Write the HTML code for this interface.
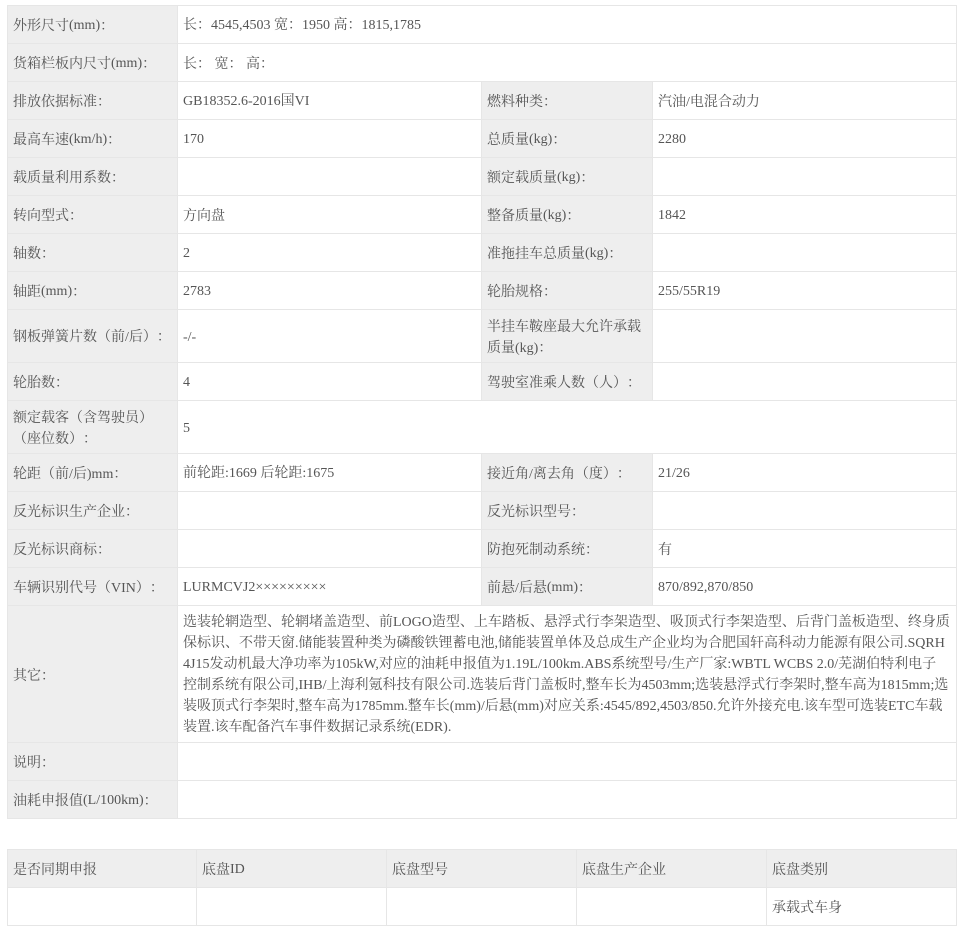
<!DOCTYPE html>
<html lang="zh"><head><meta charset="utf-8">
<style>
html,body{margin:0;padding:0;background:#fff;width:963px;height:931px;overflow:hidden}
body{font-family:"Liberation Serif","Noto Serif CJK SC",serif;font-size:14px;color:#555;line-height:21px;text-spacing-trim:space-all;font-feature-settings:"palt" 0}
table{position:absolute;left:7px;border-collapse:collapse;table-layout:fixed;width:949px}
td{border:1px solid #e6e6e6;padding:3px 5px 0;vertical-align:middle;word-break:break-all;box-sizing:border-box}
td.l{background:#eee}
td.v{padding-top:1px}
td.o{padding-top:5px}
span{position:relative;top:-1px}
</style></head><body>
<table style="top:5px">
<colgroup><col style="width:170px"><col style="width:304px"><col style="width:171px"><col style="width:304px"></colgroup>
<tr style="height:38px"><td class="l">外形尺寸<span>(mm)</span>：</td><td colspan="3" class="v">长：4545,4503 宽：1950 高：1815,1785</td></tr>
<tr style="height:38px"><td class="l">货箱栏板内尺寸<span>(mm)</span>：</td><td colspan="3">长： 宽： 高：</td></tr>
<tr style="height:38px"><td class="l">排放依据标准：</td><td class="v">GB18352.6-2016国VI</td><td class="l">燃料种类：</td><td>汽油/电混合动力</td></tr>
<tr style="height:38px"><td class="l">最高车速<span>(km/h)</span>：</td><td class="v">170</td><td class="l">总质量<span>(kg)</span>：</td><td class="v">2280</td></tr>
<tr style="height:38px"><td class="l">载质量利用系数：</td><td></td><td class="l">额定载质量<span>(kg)</span>：</td><td></td></tr>
<tr style="height:38px"><td class="l">转向型式：</td><td>方向盘</td><td class="l">整备质量<span>(kg)</span>：</td><td class="v">1842</td></tr>
<tr style="height:38px"><td class="l">轴数：</td><td class="v">2</td><td class="l">准拖挂车总质量<span>(kg)</span>：</td><td></td></tr>
<tr style="height:38px"><td class="l">轴距<span>(mm)</span>：</td><td class="v">2783</td><td class="l">轮胎规格：</td><td class="v">255/55R19</td></tr>
<tr style="height:53px"><td class="l">钢板弹簧片数（前/后）：</td><td>-/-</td><td class="l">半挂车鞍座最大允许承载质量(kg)：</td><td></td></tr>
<tr style="height:38px"><td class="l">轮胎数：</td><td class="v">4</td><td class="l">驾驶室准乘人数（人）：</td><td></td></tr>
<tr style="height:53px"><td class="l">额定载客（含驾驶员）（座位数）：</td><td colspan="3">5</td></tr>
<tr style="height:38px"><td class="l">轮距（前/后)mm：</td><td class="v">前轮距:1669 后轮距:1675</td><td class="l">接近角/离去角（度）：</td><td class="v">21/26</td></tr>
<tr style="height:38px"><td class="l">反光标识生产企业：</td><td></td><td class="l">反光标识型号：</td><td></td></tr>
<tr style="height:38px"><td class="l">反光标识商标：</td><td></td><td class="l">防抱死制动系统：</td><td>有</td></tr>
<tr style="height:38px"><td class="l">车辆识别代号（VIN）：</td><td class="v">LURMCVJ2×××××××××</td><td class="l">前悬/后悬<span>(mm)</span>：</td><td class="v">870/892,870/850</td></tr>
<tr style="height:137px"><td class="l o">其它：</td><td colspan="3" class="v">选装轮辋造型、轮辋堵盖造型、前LOGO造型、上车踏板、悬浮式行李架造型、吸顶式行李架造型、后背门盖板造型、终身质<br>保标识、不带天窗.储能装置种类为磷酸铁锂蓄电池,储能装置单体及总成生产企业均为合肥国轩高科动力能源有限公司.SQRH<br>4J15发动机最大净功率为105kW,对应的油耗申报值为1.19L/100km.ABS系统型号/生产厂家:WBTL WCBS 2.0/芜湖伯特利电子<br>控制系统有限公司,IHB/上海利氪科技有限公司.选装后背门盖板时,整车长为4503mm;选装悬浮式行李架时,整车高为1815mm;选<br>装吸顶式行李架时,整车高为1785mm.整车长(mm)/后悬(mm)对应关系:4545/892,4503/850.允许外接充电.该车型可选装ETC车载<br>装置.该车配备汽车事件数据记录系统(EDR).</td></tr>
<tr style="height:38px"><td class="l">说明：</td><td colspan="3"></td></tr>
<tr style="height:38px"><td class="l">油耗申报值<span>(L/100km)</span>：</td><td colspan="3"></td></tr>
</table>
<table style="top:849px">
<colgroup><col style="width:189px"><col style="width:190px"><col style="width:190px"><col style="width:190px"><col style="width:190px"></colgroup>
<tr style="height:38px"><td class="l">是否同期申报</td><td class="l">底盘<span>ID</span></td><td class="l">底盘型号</td><td class="l">底盘生产企业</td><td class="l">底盘类别</td></tr>
<tr style="height:38px"><td></td><td></td><td></td><td></td><td>承载式车身</td></tr>
</table>
</body></html>
